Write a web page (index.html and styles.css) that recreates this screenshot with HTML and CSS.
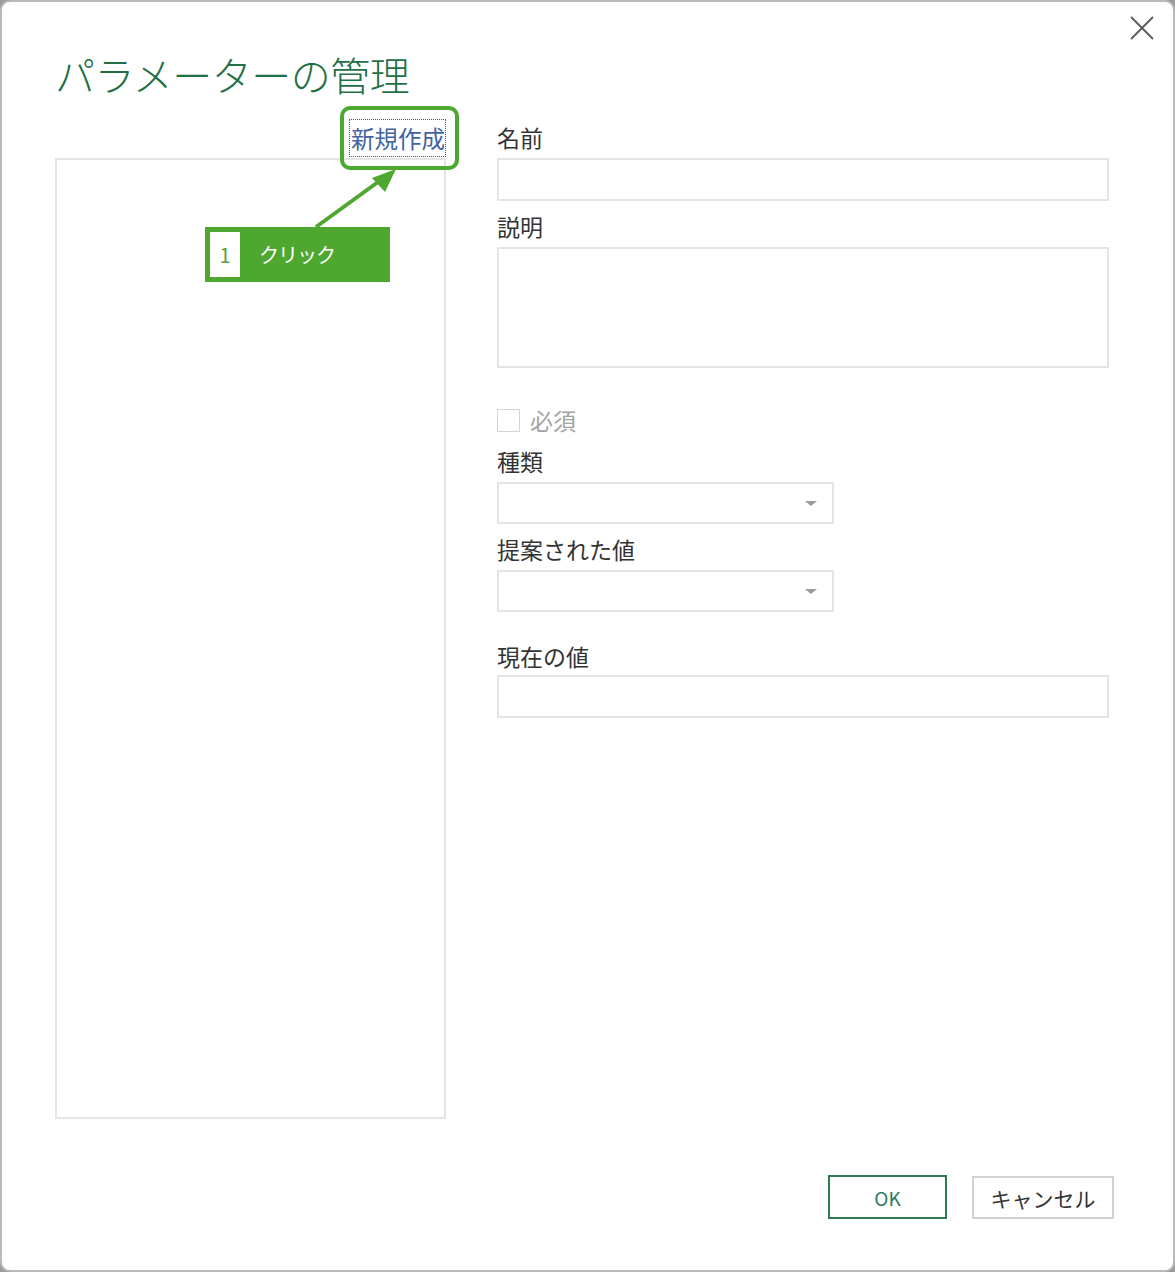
FILE: index.html
```html
<!DOCTYPE html>
<html lang="ja">
<head>
<meta charset="utf-8">
<title>パラメーターの管理</title>
<link rel="stylesheet" href="styles.css">
</head>
<body>
<div class="dialog">
  <button class="close" aria-label="閉じる">
    <svg width="24" height="24" viewBox="0 0 24 24"><path d="M1 1 L23 23 M23 1 L1 23" stroke="#5a5a5a" stroke-width="1.8" fill="none"/></svg>
  </button>
  <h1 class="title">パラメーターの管理</h1>
  <div class="body">
    <div class="left">
      <div class="link-row"><a class="new-link">新規作成</a></div>
      <div class="list"></div>
    </div>
    <div class="right">
      <div class="label first">名前</div>
      <div class="field"></div>
      <div class="label mt10">説明</div>
      <div class="field area"></div>
      <div class="check-row">
        <span class="checkbox"></span>
        <span class="check-label">必須</span>
      </div>
      <div class="label mt11">種類</div>
      <div class="field select half"><span class="caret"></span></div>
      <div class="label mt10">提案された値</div>
      <div class="field select half"><span class="caret"></span></div>
      <div class="label mt29">現在の値</div>
      <div class="field"></div>
    </div>
  </div>
  <div class="footer">
    <button class="btn ok">OK</button>
    <button class="btn cancel">キャンセル</button>
  </div>

  <div class="highlight"></div>
  <svg class="arrow" width="120" height="80" viewBox="300 160 120 80">
    <line x1="316" y1="227" x2="378" y2="182" stroke="#4ea72e" stroke-width="4"/>
    <polygon points="396,169 372,178 385,192" fill="#4ea72e"/>
  </svg>
  <div class="callout"><span class="num">1</span><span class="callout-text">クリック</span></div>
</div>
</body>
</html>
```
FILE: styles.css
```css
* { box-sizing: border-box; }
html, body {
  margin: 0;
  padding: 0;
  background: #9c9c9c;
}
body {
  font-family: "Noto Sans CJK JP", "Noto Sans", sans-serif;
  color: #333;
}
.dialog {
  position: relative;
  width: 1175px;
  height: 1272px;
  background: #fff;
  border: 2px solid #b9b9b9;
  border-radius: 10px;
  padding: 48px 59px 0 53px;
  display: flex;
  flex-direction: column;
}
.close {
  position: absolute;
  left: 1128px;
  top: 14px;
  width: 24px;
  height: 24px;
  padding: 0;
  border: 0;
  background: transparent;
  display: flex;
}
.title {
  margin: 0;
  font-size: 40px;
  line-height: 48px;
  font-weight: 300;
  color: #1f7045;
  letter-spacing: -0.5px;
}
.body {
  margin-top: 21px;
  display: flex;
  gap: 51px;
}
.left {
  width: 391px;
  display: flex;
  flex-direction: column;
}
.link-row {
  display: flex;
  justify-content: flex-end;
}
.new-link {
  display: inline-block;
  font-size: 23.5px;
  line-height: 36px;
  color: #42639e;
  border: 1px dotted #555;
  padding: 0 0 0 1px;
}
.list {
  margin-top: 1px;
  height: 961px;
  border: 2px solid #e4e4e4;
}
.right {
  width: 612px;
  padding-top: 3px;
  display: flex;
  flex-direction: column;
  align-items: flex-start;
}
.label {
  font-size: 23px;
  line-height: 30px;
  height: 30px;
  color: #333;
}
.mt10 { margin-top: 10px; }
.mt11 { margin-top: 11px; }
.mt29 { margin-top: 29px; }
.field {
  width: 612px;
  height: 43px;
  margin-top: 4px;
  border: 2px solid #e4e4e4;
  background: #fff;
}
.label.first + .field { margin-top: 6px; }
.area {
  height: 121px;
  margin-top: 6px;
}
.select {
  position: relative;
  width: 337px;
  height: 42px;
  margin-top: 6px;
  display: flex;
  align-items: center;
  justify-content: flex-end;
  padding-right: 15px;
}
.caret {
  width: 0;
  height: 0;
  border-left: 6px solid transparent;
  border-right: 6px solid transparent;
  border-top: 5px solid #9a9a9a;
}
.check-row {
  margin-top: 37px;
  height: 30px;
  display: flex;
  align-items: center;
  gap: 10px;
}
.checkbox {
  width: 23px;
  height: 23px;
  border: 1px solid #d4d4d4;
  background: #fff;
}
.check-label {
  font-size: 23px;
  line-height: 30px;
  color: #a3a3a3;
}
.footer {
  margin-top: 56px;
  display: flex;
  justify-content: flex-end;
  align-items: center;
  gap: 25px;
}
.btn {
  font-family: "Noto Sans CJK JP", "Noto Sans", sans-serif;
  background: #fff;
  padding: 0;
  display: flex;
  align-items: center;
  justify-content: center;
}
.ok {
  width: 119px;
  height: 44px;
  border: 2px solid #2f7a52;
  color: #2c7a62;
  font-size: 19px;
  margin-bottom: 1px;
}
.cancel {
  width: 142px;
  height: 43px;
  border: 2px solid #d2d2d2;
  color: #333;
  font-size: 21px;
}
.highlight {
  position: absolute;
  left: 338px;
  top: 104px;
  width: 119px;
  height: 64px;
  border: 4px solid #4ea72e;
  border-radius: 10px;
}
.arrow {
  position: absolute;
  left: 298px;
  top: 158px;
}
.callout {
  position: absolute;
  left: 203px;
  top: 225px;
  width: 185px;
  height: 55px;
  background: #4ea72e;
  display: flex;
  align-items: center;
  padding-left: 5px;
}
.num {
  width: 30px;
  height: 45px;
  background: #fff;
  color: #58a040;
  font-size: 20px;
  display: flex;
  align-items: center;
  justify-content: center;
}
.callout-text {
  margin-left: 19px;
  color: #fff;
  font-size: 20px;
  line-height: 1;
  letter-spacing: -1px;
}
```
